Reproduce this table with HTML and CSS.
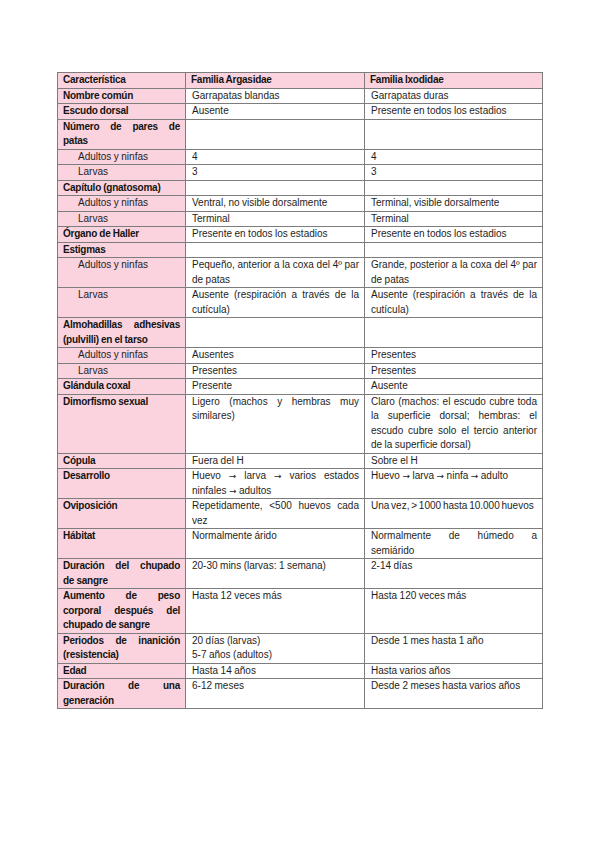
FILE: index.html
```html
<!DOCTYPE html>
<html lang="es">
<head>
<meta charset="utf-8">
<title>Argasidae vs Ixodidae</title>
<link rel="stylesheet" href="styles.css">
</head>
<body>
<div class="page">
<table class="t">
<colgroup><col class="c1"><col class="c2"><col class="c3"></colgroup>
<tr class="head"><th>Característica</th><th>Familia Argasidae</th><th>Familia Ixodidae</th></tr>
<tr><th>Nombre común</th><td>Garrapatas blandas</td><td>Garrapatas duras</td></tr>
<tr><th>Escudo dorsal</th><td>Ausente</td><td>Presente en todos los estadios</td></tr>
<tr><th><span class="j">Número de pares de</span>patas</th><td></td><td></td></tr>
<tr><th class="sub">Adultos y ninfas</th><td>4</td><td>4</td></tr>
<tr><th class="sub">Larvas</th><td>3</td><td>3</td></tr>
<tr><th>Capítulo (gnatosoma)</th><td></td><td></td></tr>
<tr><th class="sub">Adultos y ninfas</th><td>Ventral, no visible dorsalmente</td><td>Terminal, visible dorsalmente</td></tr>
<tr><th class="sub">Larvas</th><td>Terminal</td><td>Terminal</td></tr>
<tr><th>Órgano de Haller</th><td>Presente en todos los estadios</td><td>Presente en todos los estadios</td></tr>
<tr><th>Estigmas</th><td></td><td></td></tr>
<tr><th class="sub">Adultos y ninfas</th><td><span class="j">Pequeño, anterior a la coxa del 4º par</span>de patas</td><td><span class="j">Grande, posterior a la coxa del 4º par</span>de patas</td></tr>
<tr><th class="sub">Larvas</th><td><span class="j">Ausente (respiración a través de la</span>cutícula)</td><td><span class="j">Ausente (respiración a través de la</span>cutícula)</td></tr>
<tr><th><span class="j">Almohadillas adhesivas</span>(pulvilli) en el tarso</th><td></td><td></td></tr>
<tr><th class="sub">Adultos y ninfas</th><td>Ausentes</td><td>Presentes</td></tr>
<tr><th class="sub">Larvas</th><td>Presentes</td><td>Presentes</td></tr>
<tr><th>Glándula coxal</th><td>Presente</td><td>Ausente</td></tr>
<tr><th>Dimorfismo sexual</th><td><span class="j">Ligero (machos y hembras muy</span>similares)</td><td><span class="j">Claro (machos: el escudo cubre toda</span><span class="j">la superficie dorsal; hembras: el</span><span class="j">escudo cubre solo el tercio anterior</span>de la superficie dorsal)</td></tr>
<tr><th>Cópula</th><td>Fuera del H</td><td>Sobre el H</td></tr>
<tr><th>Desarrollo</th><td><span class="j">Huevo <span class="ar">→</span> larva <span class="ar">→</span> varios estados</span>ninfales <span class="ar">→</span> adultos</td><td>Huevo <span class="ar">→</span> larva <span class="ar">→</span> ninfa <span class="ar">→</span> adulto</td></tr>
<tr><th>Oviposición</th><td><span class="j">Repetidamente, &lt;500 huevos cada</span>vez</td><td class="tight">Una vez, &gt; 1000 hasta 10.000 huevos</td></tr>
<tr><th>Hábitat</th><td>Normalmente árido</td><td><span class="j">Normalmente de húmedo a</span>semiárido</td></tr>
<tr><th><span class="j">Duración del chupado</span>de sangre</th><td>20-30 mins (larvas: 1 semana)</td><td>2-14 días</td></tr>
<tr><th><span class="j">Aumento de peso</span><span class="j">corporal después del</span>chupado de sangre</th><td>Hasta 12 veces más</td><td>Hasta 120 veces más</td></tr>
<tr><th><span class="j">Periodos de inanición</span>(resistencia)</th><td><span class="l">20 días (larvas)</span>5-7 años (adultos)</td><td>Desde 1 mes hasta 1 año</td></tr>
<tr><th>Edad</th><td>Hasta 14 años</td><td>Hasta varios años</td></tr>
<tr><th><span class="j">Duración de una</span>generación</th><td>6-12 meses</td><td>Desde 2 meses hasta varios años</td></tr>
</table>
</div>
</body>
</html>
```

FILE: styles.css
```css
html, body {
  margin: 0;
  padding: 0;
  background: #ffffff;
}

.page {
  padding: 72px 0 0 57px;
}

.t {
  border-collapse: collapse;
  table-layout: fixed;
  width: 485px;
  font-family: "Liberation Sans", Arial, sans-serif;
  font-size: 10px;
  line-height: 14.5px;
  color: #1e1e1e;
  word-spacing: -0.3px;
}

.c1 { width: 128px; }
.c2 { width: 179px; }
.c3 { width: 178px; }

.t th,
.t td {
  border: 1px solid #7d7d7d;
  padding: 0 5px 0 6px;
  vertical-align: top;
  text-align: left;
}

.t th {
  background: #fad3de;
  font-weight: bold;
  letter-spacing: -0.25px;
  color: #141414;
  padding-left: 5px;
}

.t .head th {
  background: #fad3de;
}

.t th.sub {
  font-weight: normal;
  letter-spacing: 0;
  padding-left: 20px;
  color: #1e1e1e;
}

.j {
  display: block;
  text-align: justify;
  text-align-last: justify;
}

.l {
  display: block;
}

.ar {
  font-family: "DejaVu Sans", sans-serif;
  font-size: 9px;
  line-height: 1;
}

.tight {
  word-spacing: -1px;
}
```
